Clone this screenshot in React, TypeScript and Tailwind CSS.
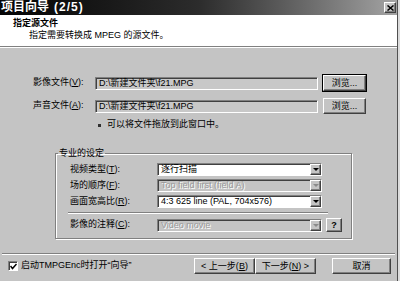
import React from 'react';

const sunken =
  'border border-t-[#808080] border-l-[#808080] border-b-white border-r-white shadow-[inset_1px_1px_0_#404040]';
const raised =
  'border border-t-white border-l-white border-b-[#404040] border-r-[#404040] shadow-[inset_-1px_-1px_0_#808080]';

function Arrow({ disabled }: { disabled?: boolean }) {
  return (
    <div className={`w-[11px] h-full flex items-center justify-center bg-[#c4c4c4] ${raised}`}>
      <div
        className={`w-0 h-0 border-x-[3px] border-x-transparent border-t-[3px] ${
          disabled ? 'border-t-[#8a8a8a]' : 'border-t-black'
        }`}
      ></div>
    </div>
  );
}

function Select({ value, disabled }: { value: string; disabled?: boolean }) {
  return (
    <div
      className={`w-[165px] h-[13px] flex items-stretch ${sunken} ${
        disabled ? 'bg-[#c4c4c4]' : 'bg-white'
      }`}
    >
      <div
        className={`flex-1 pl-[3px] leading-[11px] whitespace-nowrap overflow-hidden ${
          disabled ? 'text-[#9a9a9a] [text-shadow:1px_1px_0_#fff]' : 'text-black'
        }`}
      >
        {value}
      </div>
      <Arrow disabled={disabled} />
    </div>
  );
}

function Btn({ children, className = '' }: { children: React.ReactNode; className?: string }) {
  return (
    <div
      className={`h-[16px] flex items-center justify-center bg-[#c4c4c4] leading-none ${raised} ${className}`}
    >
      {children}
    </div>
  );
}

export default function App() {
  return (
    <div
      className="w-[400px] h-[281px] overflow-hidden bg-[#dcdcdc] flex text-[9px] text-black"
      style={{ fontFamily: '"Liberation Sans", "Noto Sans CJK SC", sans-serif' }}
    >
      <div className="w-[398px] h-full bg-[#c4c4c4] border-r border-r-[#505050] flex flex-col">
        {/* title bar */}
        <div className="h-[15px] flex items-center bg-linear-to-r from-[#050505] via-[#2c2c2c] to-[#a4a4a4]">
          <div className="pl-[1px] text-white font-bold text-[12px] leading-[15px] whitespace-nowrap">
            项目向导<span className="ml-[5px] tracking-[1px]">(2/5)</span>
          </div>
          <div className={`ml-auto mr-[1px] w-[12px] h-[11px] bg-[#c4c4c4] flex items-center justify-center ${raised}`}>
            <svg width="7" height="6" viewBox="0 0 7 6">
              <path d="M0.5 0.5 L6.5 5.5 M6.5 0.5 L0.5 5.5" stroke="#000" strokeWidth="1.5" />
            </svg>
          </div>
        </div>

        {/* header */}
        <div className="h-[32px] bg-white border-b border-b-[#808080] pt-[2px] leading-[12px]">
          <div className="pl-[13px] font-bold">指定源文件</div>
          <div className="pl-[29px]">指定需要转换成 MPEG 的源文件。</div>
        </div>

        {/* body */}
        <div className="flex-1 border-t border-t-white flex flex-col">
          <div className="mt-[27px] h-[16px] flex items-center pl-[33px]">
            <div className="w-[62px] whitespace-nowrap">影像文件(<span className="underline">V</span>):</div>
            <div className={`w-[223px] h-[13px] pl-[3px] leading-[11px] bg-[#c8c8c8] ${sunken}`}>
              D:\新建文件夹\f21.MPG
            </div>
            <div className="ml-[5px] outline outline-black">
              <Btn className="w-[43px]">浏览...</Btn>
            </div>
          </div>
          <div className="mt-[7px] h-[16px] flex items-center pl-[33px]">
            <div className="w-[62px] whitespace-nowrap">声音文件(<span className="underline">A</span>):</div>
            <div className={`w-[223px] h-[13px] pl-[3px] leading-[11px] bg-[#c8c8c8] ${sunken}`}>
              D:\新建文件夹\f21.MPG
            </div>
            <Btn className="ml-[5px] w-[43px]">浏览...</Btn>
          </div>
          <div className="mt-[4px] h-[14px] flex items-center pl-[98px]">
            <div className="w-[3px] h-[3px] bg-[#303030]"></div>
            <div className="ml-[6px] whitespace-nowrap">可以将文件拖放到此窗口中。</div>
          </div>

          {/* group box */}
          <fieldset className="mt-[15px] ml-[55px] w-[297px] border border-[#808080] shadow-[1px_1px_0_#fff,inset_1px_1px_0_#fff] pb-[6px]">
            <legend className="ml-[2px] px-[1px] leading-[12px]">专业的设定</legend>
            <div className="pt-[4px] flex flex-col gap-[3px]">
              <div className="h-[13px] flex items-center pl-[14px]">
                <div className="w-[87px] whitespace-nowrap">视频类型(<span className="underline">T</span>):</div>
                <Select value="逐行扫描" />
              </div>
              <div className="h-[13px] flex items-center pl-[14px]">
                <div className="w-[87px] whitespace-nowrap">场的顺序(<span className="underline">F</span>):</div>
                <Select value="Top field first (field A)" disabled />
              </div>
              <div className="h-[13px] flex items-center pl-[14px]">
                <div className="w-[87px] whitespace-nowrap">画面宽高比(<span className="underline">R</span>):</div>
                <Select value="4:3 625 line (PAL, 704x576)" />
              </div>
            </div>
            <div className="mt-[4px] ml-[12px] w-[260px] h-[2px] border-t border-t-[#808080] border-b border-b-white"></div>
            <div className="mt-[4px] h-[14px] flex items-center pl-[14px]">
              <div className="w-[87px] whitespace-nowrap">影像的注释(<span className="underline">C</span>):</div>
              <Select value="Video movie" disabled />
              <Btn className="ml-[4px] w-[16px] !h-[14px] font-bold">?</Btn>
            </div>
          </fieldset>

          <div className="mt-[14px] mx-[2px] h-[2px] border-t border-t-[#808080] border-b border-b-white"></div>

          {/* bottom bar */}
          <div className="mt-[3px] h-[16px] flex items-center">
            <div className="ml-[8px] w-[10px] h-[10px] bg-white flex items-center justify-center border border-t-[#808080] border-l-[#808080] border-b-white border-r-white shadow-[inset_1px_1px_0_#404040]">
              <svg width="7" height="7" viewBox="0 0 7 7">
                <path d="M0.5 3 L2.5 5.5 L6.5 1" stroke="#000" strokeWidth="1.5" fill="none" />
              </svg>
            </div>
            <div className="ml-[3px] whitespace-nowrap">启动TMPGEnc时打开“向导”</div>
            <div className="ml-auto flex items-center">
              <Btn className="w-[61px]">&lt; 上一步(<span className="underline">B</span>)</Btn>
              <Btn className="w-[61px]">下一步(<span className="underline">N</span>) &gt;</Btn>
              <Btn className="ml-[16px] mr-[6px] w-[59px]">取消</Btn>
            </div>
          </div>
        </div>
      </div>
    </div>
  );
}
